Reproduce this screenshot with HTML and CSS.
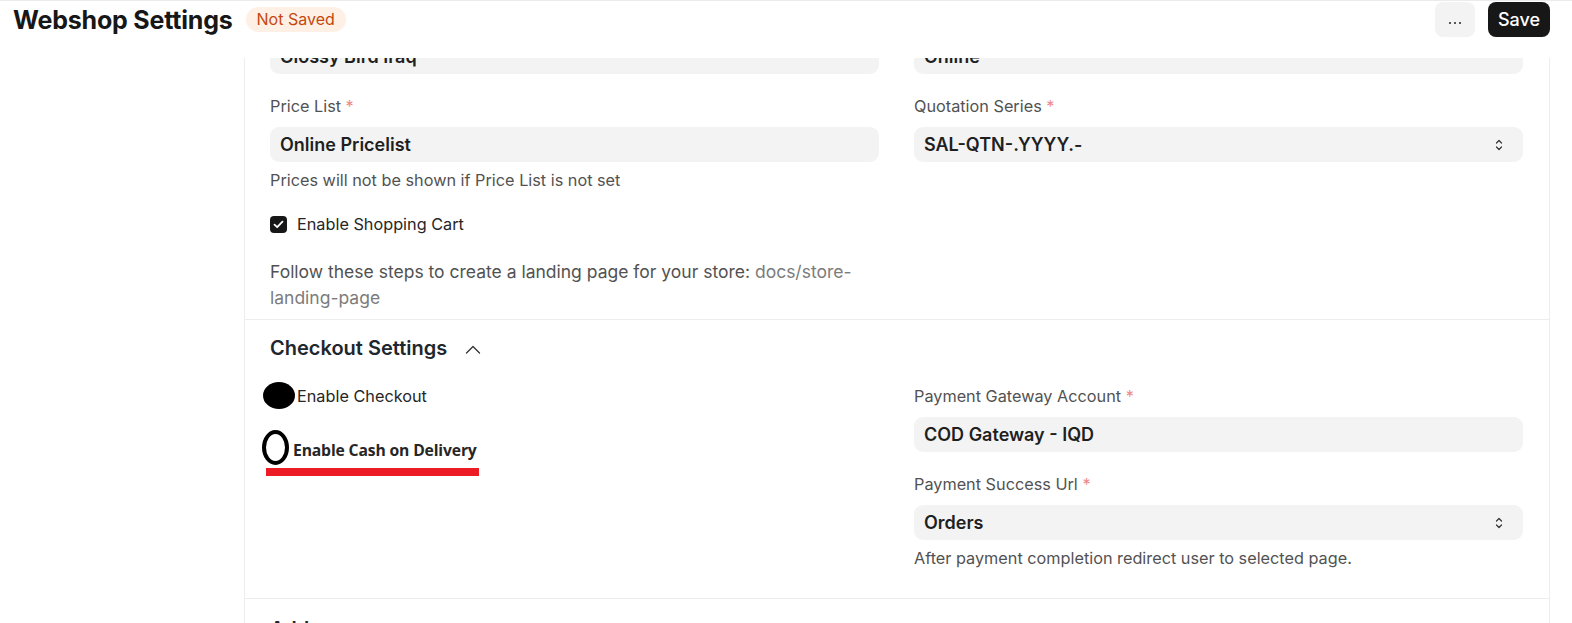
FILE: index.html
```html
<!DOCTYPE html>
<html lang="en">
<head>
    <meta charset="UTF-8">
    <meta name="viewport" content="width=device-width, initial-scale=1.0">
    <title>Webshop Settings</title>
    <link rel="stylesheet" href="styles.css">
</head>
<body>

<header class="page-head">
    <div class="title-area">
        <h1 class="page-title">Webshop Settings</h1>
        <span class="indicator-pill">Not Saved</span>
    </div>
    <div class="page-actions">
        <button class="btn btn-menu" aria-label="Menu">
            <svg width="14" height="4" viewBox="0 0 14 4"><circle cx="2" cy="2" r="1.1"/><circle cx="7" cy="2" r="1.1"/><circle cx="12" cy="2" r="1.1"/></svg>
        </button>
        <button class="btn btn-primary">Save</button>
    </div>
</header>

<div class="layout">
    <aside class="sidebar"></aside>

    <main class="form-page">
        <!-- Shopping Cart (scrolled, top hidden under header) -->
        <section class="form-section">
            <div class="section-body">
                <div class="form-column">
                    <div class="form-group">
                        <label class="control-label">Company <span class="reqd">*</span></label>
                        <div class="control-input">Glossy Bird Iraq</div>
                    </div>
                    <div class="form-group has-help">
                        <label class="control-label">Price List <span class="reqd">*</span></label>
                        <div class="control-input">Online Pricelist</div>
                        <p class="control-help">Prices will not be shown if Price List is not set</p>
                    </div>
                    <div class="check-row cart-row">
                        <span class="checkbox checked">
                            <svg width="11" height="9" viewBox="0 0 11 9"><path d="M1.5 4.6 4.2 7.2 9.5 1.6" fill="none" stroke="#fff" stroke-width="1.8" stroke-linecap="round" stroke-linejoin="round"/></svg>
                        </span>
                        <span class="check-label">Enable Shopping Cart</span>
                    </div>
                    <div class="html-block">
                        Follow these steps to create a landing page for your store: <a class="doc-link">docs/store-landing-page</a>
                    </div>
                </div>
                <div class="form-column">
                    <div class="form-group">
                        <label class="control-label">Default Customer Group <span class="reqd">*</span></label>
                        <div class="control-input">Online</div>
                    </div>
                    <div class="form-group">
                        <label class="control-label">Quotation Series <span class="reqd">*</span></label>
                        <div class="control-input select">
                            SAL-QTN-.YYYY.-
                            <svg class="select-icon" width="10" height="14" viewBox="0 0 10 14"><path d="M2.5 5 5 2.5 7.5 5M2.5 9 5 11.5 7.5 9" fill="none" stroke="#333" stroke-width="1.2" stroke-linecap="round" stroke-linejoin="round"/></svg>
                        </div>
                    </div>
                </div>
            </div>
        </section>

        <!-- Checkout Settings -->
        <section class="form-section checkout">
            <div class="section-head">
                Checkout Settings
                <svg class="collapse-icon" width="16" height="9" viewBox="0 0 16 9"><path d="M1.5 8 8 1.5 14.5 8" fill="none" stroke="#333" stroke-width="1.3" stroke-linecap="round" stroke-linejoin="round"/></svg>
            </div>
            <div class="section-body">
                <div class="form-column cod-rows">
                    <div class="check-row">
                        <span class="checkbox"></span>
                        <span class="check-label">Enable Checkout</span>
                        <span class="mark-fill"></span>
                    </div>
                    <div class="check-row pasted">
                        <span class="mark-ring"></span>
                        <span class="pasted-label">Enable Cash on Delivery</span>
                        <span class="mark-underline"></span>
                    </div>
                </div>
                <div class="form-column">
                    <div class="form-group">
                        <label class="control-label">Payment Gateway Account <span class="reqd">*</span></label>
                        <div class="control-input">COD Gateway - IQD</div>
                    </div>
                    <div class="form-group has-help">
                        <label class="control-label">Payment Success Url <span class="reqd">*</span></label>
                        <div class="control-input select">
                            Orders
                            <svg class="select-icon" width="10" height="14" viewBox="0 0 10 14"><path d="M2.5 5 5 2.5 7.5 5M2.5 9 5 11.5 7.5 9" fill="none" stroke="#333" stroke-width="1.2" stroke-linecap="round" stroke-linejoin="round"/></svg>
                        </div>
                        <p class="control-help">After payment completion redirect user to selected page.</p>
                    </div>
                </div>
            </div>
        </section>

        <!-- Add-ons -->
        <section class="form-section addons">
            <div class="section-head">Add-ons</div>
        </section>
    </main>
</div>

</body>
</html>
```

FILE: styles.css
```css
html, body {
    margin: 0;
    height: 100%;
    overflow: hidden;
}
body {
    font-family: Inter, "Noto Sans", sans-serif;
    background-color: #fff;
    color: #1f1f1f;
}

/* sticky page header, lies over the scrolled form */
.page-head {
    position: fixed;
    top: 0;
    left: 0;
    right: 0;
    height: 56px;
    z-index: 10;
    display: flex;
    justify-content: space-between;
    align-items: flex-start;
    padding: 1px 22px 0 13px;
    background-color: #fff;
    border-top: 1px solid #ebebeb;
}
.title-area {
    display: flex;
    align-items: center;
    gap: 13px;
    height: 35px;
}
.page-title {
    margin: 0;
    font-size: 25px;
    font-weight: 700;
    letter-spacing: -0.2px;
    color: #171717;
}
.indicator-pill {
    height: 25px;
    line-height: 25px;
    padding: 0 11px;
    border-radius: 13px;
    font-size: 16px;
    color: #c4480e;
    background-color: #fff0e6;
}
.page-actions {
    display: flex;
    gap: 13px;
}
.btn {
    height: 35px;
    border: none;
    border-radius: 8px;
    font-family: inherit;
    cursor: pointer;
}
.btn-menu {
    width: 40px;
    background-color: #f3f3f3;
    fill: #333;
}
.btn-primary {
    width: 62px;
    font-size: 18px;
    font-weight: 500;
    color: #fff;
    background-color: #171717;
}

/* page layout */
.layout {
    display: grid;
    grid-template-columns: 244px 1306px;
}
.form-page {
    border-left: 1px solid #ededed;
    border-right: 1px solid #ededed;
}
.form-section {
    padding: 8px 26px 8px 25px;
    border-bottom: 1px solid #ededed;
}
.form-section.checkout {
    padding-bottom: 10px;
}
.form-section.addons {
    padding-top: 10px;
}
.section-head {
    display: flex;
    align-items: center;
    gap: 18px;
    padding-top: 8px;
    margin-bottom: 26px;
    font-size: 20px;
    line-height: 24px;
    font-weight: 600;
    color: #1f272e;
}
.collapse-icon {
    margin-top: 3px;
}
.section-body {
    display: grid;
    grid-template-columns: 609px 609px;
    gap: 35px;
}

/* fields */
.form-group {
    margin-bottom: 22px;
}
.form-group.has-help {
    margin-bottom: 20px;
}
.control-label {
    display: block;
    margin-bottom: 11px;
    font-size: 16.25px;
    line-height: 20px;
    color: #525252;
}
.reqd {
    color: #ee8a8a;
}
.control-input {
    position: relative;
    height: 35px;
    line-height: 35px;
    padding: 0 10px;
    border-radius: 9px;
    background-color: #f3f3f3;
    font-size: 18px;
    font-weight: 600;
    color: #1f1f1f;
}
.select-icon {
    position: absolute;
    right: 19px;
    top: 11px;
}
.control-help {
    margin: 8px 0 0;
    font-size: 16.25px;
    line-height: 20px;
    color: #525252;
}

/* checkboxes */
.check-row {
    position: relative;
    display: flex;
    align-items: center;
    gap: 10px;
    margin-bottom: 25px;
    font-size: 16.25px;
    line-height: 20px;
    color: #262626;
}
.cart-row {
    padding-top: 4px;
}
.checkbox {
    display: flex;
    align-items: center;
    justify-content: center;
    width: 17px;
    height: 17px;
    box-sizing: border-box;
    border-radius: 4px;
    border: 1px solid #c7c7c7;
}
.checkbox.checked {
    border: none;
    background-color: #171717;
}
.html-block {
    font-size: 17.5px;
    line-height: 26px;
    color: #525252;
}
.doc-link {
    color: #7c7c7c;
}

/* checkout rows with the hand-drawn marks pasted on top */
.cod-rows .check-row {
    margin: 0 0 34px;
}
.check-row.pasted {
    padding-left: 23px;
}
.pasted-label {
    font-family: "Open Sans", sans-serif;
    font-size: 15.7px;
    font-weight: 700;
    letter-spacing: -0.15px;
    color: #262626;
}
.mark-fill {
    position: absolute;
    left: -7px;
    top: -4px;
    width: 32px;
    height: 27px;
    border-radius: 50%;
    background-color: #000;
}
.mark-ring {
    position: absolute;
    left: -8px;
    top: -10px;
    width: 27px;
    height: 35px;
    box-sizing: border-box;
    border: 4px solid #000;
    border-radius: 50%;
    background-color: #fff;
}
.mark-underline {
    position: absolute;
    left: -4px;
    top: 28px;
    width: 213px;
    height: 8px;
    background-color: #ed1c24;
}
```
